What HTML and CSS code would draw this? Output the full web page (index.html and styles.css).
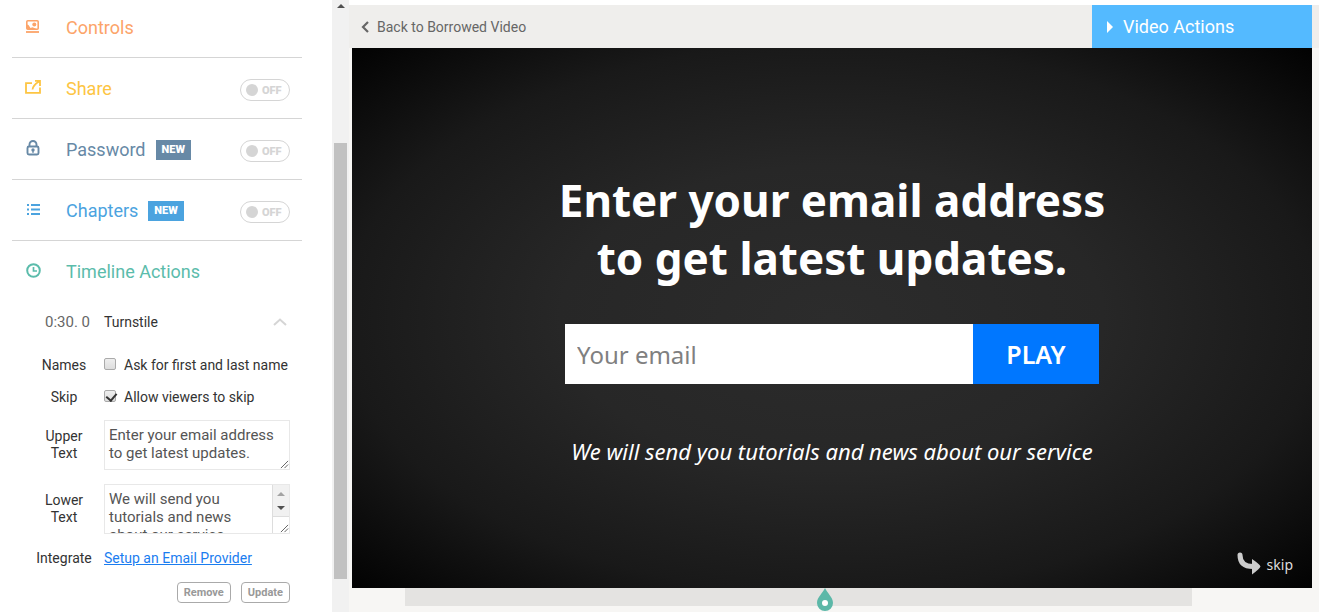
FILE: index.html
```html
<!DOCTYPE html>
<html lang="en">
<head>
<meta charset="utf-8">
<meta name="viewport" content="width=device-width, initial-scale=1">
<title>Video settings</title>
<link rel="stylesheet" href="styles.css">
</head>
<body>
<div class="app">
  <aside class="sidebar">
    <div class="panel">
      <section class="row controls">
        <svg class="icon" viewBox="0 0 18 18" fill="none" stroke="currentColor" stroke-width="1.6"><rect x="2.800" y="2.800" width="11.400" height="8.400" rx="1"/><path d="M2 14h13" stroke-width="1.800"/><path d="M3 6.500l1.500.5 2 3 2-.8 4 1.800H3z" fill="currentColor" stroke="none"/><circle cx="10.300" cy="6.500" r="2" fill="currentColor" stroke="none"/></svg>
        <h2 class="name">Controls</h2>
      </section>
      <section class="row share">
        <svg class="icon" viewBox="0 0 18 18" fill="none" stroke="currentColor" stroke-width="1.800"><path d="M8 4.200H2v9.600h14V8.500"/><path d="M8.500 10.500c.3-3.500 2.500-5.500 6.500-8M11 1.800h5V7" stroke-width="1.800"/></svg>
        <h2 class="name">Share</h2>
        <button class="toggle" type="button" aria-pressed="false"><span class="knob"></span>OFF</button>
      </section>
      <section class="row password">
        <svg class="icon" viewBox="0 0 18 18" fill="none" stroke="currentColor" stroke-width="1.900"><rect x="3.500" y="6.500" width="11" height="8" rx="1.500"/><path d="M5.500 6.500V4.500a3.500 3.500 0 0 1 7 0v2"/><circle cx="9" cy="10" r="1.700" fill="currentColor" stroke="none"/><path d="M9 10v3" stroke-width="1.200"/></svg>
        <h2 class="name">Password</h2><span class="tag">NEW</span>
        <button class="toggle" type="button" aria-pressed="false"><span class="knob"></span>OFF</button>
      </section>
      <section class="row chapters">
        <svg class="icon" viewBox="0 0 18 18" fill="none" stroke="currentColor" stroke-width="1.900"><path d="M3 4h2M3 8.500h2M3 13h2M7 4h9M7 8.500h9M7 13h9"/></svg>
        <h2 class="name">Chapters</h2><span class="tag">NEW</span>
        <button class="toggle" type="button" aria-pressed="false"><span class="knob"></span>OFF</button>
      </section>
      <section class="row timeline-actions">
        <svg class="icon" viewBox="0 0 18 18" fill="none" stroke="currentColor" stroke-width="2"><circle cx="9.500" cy="7.500" r="6.300"/><path d="M9.500 4v4h3.500" stroke-width="1.700"/></svg>
        <h2 class="name">Timeline Actions</h2>
      </section>

      <form class="action">
        <div class="line head">
          <span class="time">0:30. 0</span>
          <span class="grow">Turnstile</span>
          <svg class="chevron" viewBox="0 0 14 8" fill="none" stroke="#d5d5d5" stroke-width="2"><path d="M1 7l6-5.500L13 7"/></svg>
        </div>
        <div class="line">
          <span class="label">Names</span>
          <label class="check"><input type="checkbox">Ask for first and last name</label>
        </div>
        <div class="line">
          <span class="label">Skip</span>
          <label class="check"><input type="checkbox" checked>Allow viewers to skip</label>
        </div>
        <div class="line area">
          <label class="label" for="upper">Upper Text</label>
          <div class="box">
            <textarea id="upper">Enter your email address to get latest updates.</textarea>
            <svg class="grip" viewBox="0 0 10 10" stroke="#555" stroke-width="1"><path d="M1 9l8-8M5 9l4-4"/></svg>
          </div>
        </div>
        <div class="line area">
          <label class="label" for="lower">Lower Text</label>
          <div class="box scrolls">
            <textarea id="lower">We will send you tutorials and news about our service</textarea>
            <div class="mini-scroll">
              <svg viewBox="0 0 16 32"><path d="M4 11l4-4 4 4z" fill="#a3a3a3"/><path d="M4 21l4 4 4-4z" fill="#505050"/></svg>
            </div>
            <svg class="grip" viewBox="0 0 10 10" stroke="#555" stroke-width="1"><path d="M1 9l8-8M5 9l4-4"/></svg>
          </div>
        </div>
        <div class="line integrate">
          <span class="label">Integrate</span>
          <a class="link" href="#provider">Setup an Email Provider</a>
        </div>
        <div class="buttons">
          <button class="small" type="button">Remove</button>
          <button class="small" type="button">Update</button>
        </div>
      </form>
    </div>
    <div class="scrollbar">
      <svg class="arrow" viewBox="0 0 15 12"><path d="M4 8l4-4 4 4z" fill="#505050"/></svg>
      <div class="thumb"></div>
    </div>
  </aside>

  <main class="main">
    <header class="bar">
      <a class="back" href="#back"><svg class="back-icon" viewBox="0 0 8 12" fill="none" stroke="#666" stroke-width="2.200"><path d="M7 1L2 6l5 5"/></svg>Back to Borrowed Video</a>
      <button class="video-actions" type="button"><svg class="play-icon" viewBox="0 0 6 12"><path d="M0 0l6 6-6 6z" fill="#fff"/></svg>Video Actions</button>
    </header>
    <div class="stage">
      <section class="video">
        <h1 class="title">Enter your email address<br>to get latest updates.</h1>
        <form class="signup">
          <input class="email" type="email" placeholder="Your email" aria-label="Your email">
          <button class="play" type="button">PLAY</button>
        </form>
        <p class="note">We will send you tutorials and news about our service</p>
        <button class="skip" type="button"><svg class="skip-icon" viewBox="0 0 24 24"><path d="M3 3c0 8 5 11.500 13 11.500" fill="none" stroke="#ccc" stroke-width="5" stroke-linecap="round"/><path d="M15 7q8 5.500 8.500 7.500-.5 2-8.500 8z" fill="#ccc"/></svg>skip</button>
      </section>
      <div class="track">
        <svg class="marker" viewBox="0 0 16 24"><path d="M8 0c2 5 8 9 8 15a8 8 0 0 1-16 0C0 9 6 5 8 0z" fill="#5cb8a8"/><circle cx="8" cy="15" r="3" fill="#fff"/></svg>
      </div>
    </div>
  </main>
</div>
</body>
</html>
```
FILE: styles.css
```css
* { box-sizing: border-box; }

body {
  margin: 0;
  background: #fff;
  color: #333;
  font-family: Roboto, "Liberation Sans", sans-serif;
  font-size: 14px;
}

button { font-family: inherit; cursor: pointer; }

.app {
  display: flex;
  height: 100vh;
  overflow: hidden;
}

/* Sidebar */
.sidebar {
  flex: none;
  display: flex;
  width: 349px;
}

.panel {
  flex: 1;
  margin-top: -3px;
  padding: 0 30px 0 12px;
}

.row {
  display: flex;
  align-items: center;
  height: 61px;
  padding: 0 12px;
  border-bottom: 1px solid #d5d5d5;
}

.timeline-actions { border-bottom: 0; }
.controls { color: #fca469; }
.share { color: #fdc543; }
.password { color: #6789a6; }
.chapters { color: #4ba3df; }
.timeline-actions { color: #5bbcab; }

.icon {
  width: 18px;
  height: 18px;
  margin-right: 24px;
}

.name {
  margin: 0;
  font-size: 18px;
  font-weight: 400;
}

.tag {
  margin: 2px 0 0 10px;
  padding: 0 6px;
  background: #6789a6;
  color: #fff;
  font-size: 11px;
  font-weight: 900;
  line-height: 20px;
}

.chapters .tag { background: #4ba3df; }

.toggle {
  display: flex;
  align-items: center;
  gap: 4px;
  width: 50px;
  height: 22px;
  margin: 4px 0 0 auto;
  padding: 0 5px;
  border: 1px solid #d5d5d5;
  border-radius: 11px;
  background: #fff;
  color: #d5d5d5;
  font-size: 11px;
  font-weight: 900;
}

.knob {
  width: 12px;
  height: 12px;
  border-radius: 50%;
  background: #d5d5d5;
}

.action { padding: 0 12px 0 22px; }

.line {
  display: grid;
  grid-template-columns: 60px 1fr;
  column-gap: 10px;
  align-items: center;
  min-height: 32px;
}

.head {
  grid-template-columns: 60px 1fr 14px;
  min-height: 40px;
  margin-bottom: 7px;
  padding-right: 3px;
}

.time {
  padding-left: 11px;
  color: #666;
  font-size: 15px;
  white-space: nowrap;
}

.chevron { width: 14px; height: 8px; }
.label { text-align: center; line-height: 17px; }
.area .label { padding: 0 8px; }

.check {
  display: flex;
  align-items: center;
  gap: 8px;
  white-space: nowrap;
}

.check input {
  appearance: none;
  flex: none;
  width: 12px;
  height: 12px;
  margin: 0 0 3px;
  border: 1px solid #aaa;
  border-radius: 2px;
  background: linear-gradient(#eee, #ddd);
}

.check input:checked::before {
  content: "";
  display: block;
  width: 5px;
  height: 8px;
  margin-left: 3px;
  border: solid #333;
  border-width: 0 2px 2px 0;
  transform: rotate(40deg);
}

.area { margin: 7px 0 14px; }
.area + .area { margin: 0 0 8px; }

.box {
  position: relative;
  height: 50px;
}

.box textarea {
  display: block;
  width: 100%;
  height: 50px;
  padding: 5px 4px;
  border: 1px solid #e8e8e8;
  border-radius: 0;
  outline: 0;
  resize: none;
  overflow: hidden;
  background: #fff;
  color: #555;
  font: 15px/18px Roboto, "Liberation Sans", sans-serif;
}

.box.scrolls textarea { padding-right: 20px; }

.mini-scroll {
  position: absolute;
  top: 1px;
  right: 1px;
  width: 17px;
  height: 48px;
  border-left: 1px solid #ddd;
  background: linear-gradient(#f1f1f1 31px, #ddd 31px, #ddd 32px, #fff 32px);
}

.mini-scroll svg { display: block; width: 16px; height: 32px; }

.grip {
  position: absolute;
  right: 1px;
  bottom: 1px;
  width: 9px;
  height: 9px;
}

.link { color: #1a7df0; text-decoration: underline; }

.buttons {
  display: flex;
  justify-content: flex-end;
  gap: 10px;
  margin-top: 8px;
}

.small {
  height: 21px;
  padding: 0 6px;
  border: 1px solid #aaa;
  border-radius: 4px;
  background: #fff;
  color: #999;
  font-size: 11px;
  font-weight: 700;
}

.scrollbar {
  flex: none;
  width: 17px;
  padding: 0 2px;
  background: #f1f1f1;
}

.arrow { display: block; width: 15px; height: 12px; margin-left: -1px; }

.thumb {
  height: 436px;
  margin-top: 131px;
  background: #c1c1c1;
}

/* Video area */
.main {
  flex: 1;
  display: flex;
  flex-direction: column;
  min-width: 0;
  padding-top: 5px;
}

.bar {
  flex: none;
  display: flex;
  justify-content: space-between;
  height: 43px;
  padding: 0 7px 0 12px;
  background: #efeeec;
}

.back {
  display: flex;
  align-items: center;
  gap: 8px;
  color: #666;
  text-decoration: none;
}

.back-icon { width: 8px; height: 12px; }

.video-actions {
  display: flex;
  align-items: center;
  gap: 10px;
  width: 220px;
  padding: 0 15px;
  border: 0;
  background: #54baff;
  color: #fff;
  font-size: 18px;
}

.play-icon { width: 6px; height: 12px; }

.stage {
  flex: 1;
  padding: 0 7px 0 3px;
  background: #f7f6f4;
}

.video {
  position: relative;
  display: flex;
  flex-direction: column;
  align-items: center;
  aspect-ratio: 16 / 9;
  padding-top: 123px;
  background: radial-gradient(#2c2c2c, #272727 40%, #191919 72%, #020202);
  color: #fff;
  font-family: "Noto Sans", "Open Sans", sans-serif;
}

.title {
  margin: 0 0 37px;
  font-size: 44px;
  line-height: 58px;
  text-align: center;
}

.signup {
  display: flex;
  width: 534px;
  height: 60px;
  margin-bottom: 51px;
}

.email {
  flex: 1;
  min-width: 0;
  padding: 0 12px;
  border: 0;
  border-radius: 0;
  background: #fff;
  font: 24px "Noto Sans", sans-serif;
}

.email::placeholder { color: #808080; }

.play {
  width: 126px;
  border: 0;
  background: #07f;
  color: #fff;
  font-size: 25px;
  font-weight: 600;
}

.note {
  margin: 0;
  font-size: 22px;
  font-style: italic;
  line-height: 32px;
}

.skip {
  position: absolute;
  right: 19px;
  bottom: 12px;
  display: flex;
  align-items: center;
  gap: 6px;
  padding: 0;
  border: 0;
  background: none;
  color: #ddd;
  font-size: 14px;
}

.skip-icon { width: 24px; height: 24px; }

.track {
  position: relative;
  height: 18px;
  margin: 0 120px 0 53px;
  background: #e4e3e1;
}

.marker {
  position: absolute;
  left: 412px;
  top: 0;
  width: 16px;
  height: 24px;
}
```
